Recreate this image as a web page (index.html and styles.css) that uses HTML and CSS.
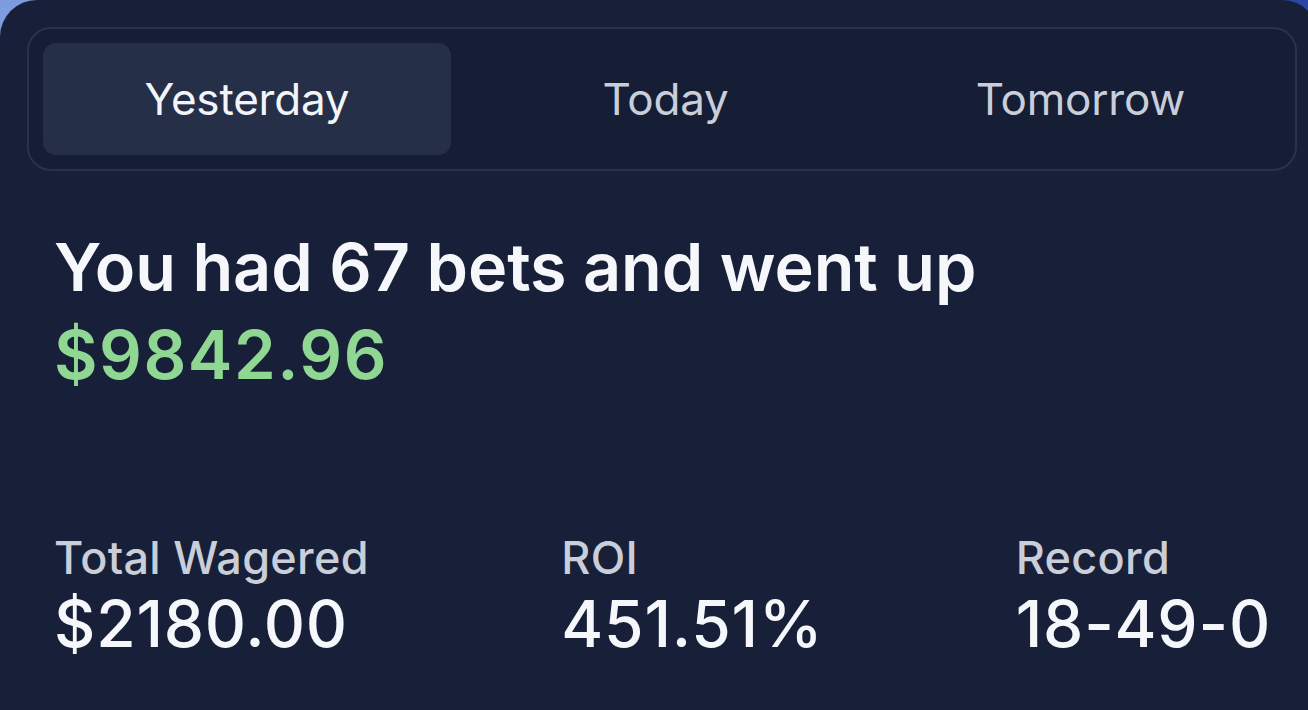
FILE: index.html
```html
<!DOCTYPE html>
<html lang="en">
<head>
<meta charset="utf-8">
<title>Summary</title>
<link rel="stylesheet" href="styles.css">
</head>
<body>
<main class="card">
  <nav class="tabs">
    <button class="tab tab-active">Yesterday</button>
    <button class="tab">Today</button>
    <button class="tab">Tomorrow</button>
  </nav>
  <section class="summary">
    <h1 class="headline">You had 67 bets and went up</h1>
    <div class="amount">$9842.96</div>
  </section>
  <section class="stats">
    <div class="stat">
      <div class="stat-label">Total Wagered</div>
      <div class="stat-value">$2180.00</div>
    </div>
    <div class="stat">
      <div class="stat-label">ROI</div>
      <div class="stat-value">451.51%</div>
    </div>
    <div class="stat">
      <div class="stat-label">Record</div>
      <div class="stat-value">18-49-0</div>
    </div>
  </section>
</main>
</body>
</html>
```

FILE: styles.css
```css
* { box-sizing: border-box; }
html, body { margin: 0; padding: 0; }
body {
  width: 1308px;
  height: 710px;
  overflow: hidden;
  background: linear-gradient(90deg, #7d9de0 0%, #4a6bc4 50%, #2a48a3 100%);
  font-family: Inter, "Noto Sans", sans-serif;
}
.card {
  width: 1319px;
  height: 710px;
  overflow: hidden;
  background: #172038;
  border-radius: 37px 37px 0 0;
  padding: 27px 22px 0 27px;
}
.tabs {
  display: flex;
  gap: 14px;
  border: 2px solid #29334d;
  border-radius: 24px;
  padding: 14px;
  background: #161e35;
}
.tab {
  flex: 1;
  height: 112px;
  border: none;
  background: transparent;
  border-radius: 13px;
  font-family: inherit;
  font-size: 44px;
  font-weight: 400;
  color: #c9cedb;
  letter-spacing: -0.2px;
}
.tab-active {
  flex: 0 0 408px;
  background: #252f48;
  color: #f2f4f8;
}
.summary {
  padding: 52px 0 0 27px;
}
.headline {
  margin: 0;
  font-size: 66.5px;
  line-height: 88px;
  font-weight: 600;
  color: #f6f7fa;
  letter-spacing: -0.1px;
}
.amount {
  font-size: 67px;
  line-height: 88px;
  font-weight: 600;
  color: #8fd793;
  letter-spacing: 1.5px;
}
.stats {
  display: flex;
  justify-content: space-between;
  padding: 128px 26px 0 27px;
}
.stat-label {
  font-size: 45px;
  line-height: 61px;
  font-weight: 500;
  color: #c9ced9;
  letter-spacing: 0.3px;
}
.stat-value {
  font-size: 64px;
  line-height: 72px;
  font-weight: 500;
  color: #f6f7fa;
  letter-spacing: 0.8px;
}
```
